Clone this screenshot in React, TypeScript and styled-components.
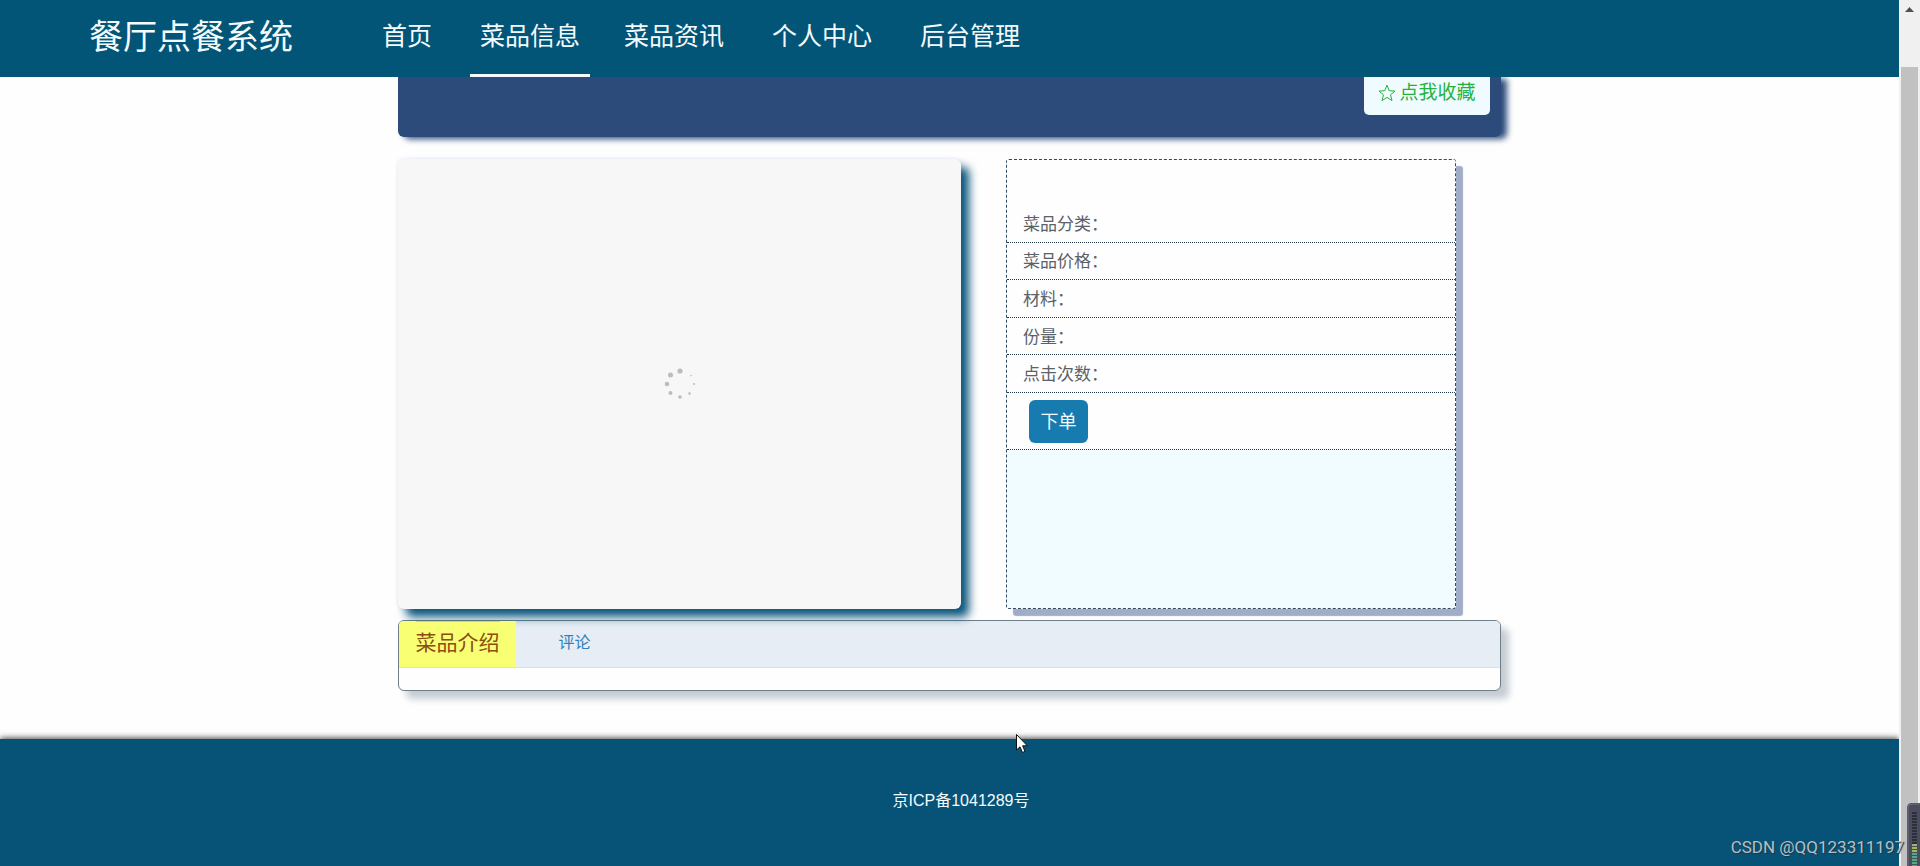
import React from "react";
import styled, { createGlobalStyle } from "styled-components";

const GlobalStyle = createGlobalStyle`
  *, *::before, *::after { box-sizing: border-box; }
  body {
    margin: 0;
    background: #fefefe;
    color: #5b6168;
    font-family: "Liberation Sans", "Noto Sans CJK SC", sans-serif;
    font-size: 16px;
  }
  a { color: inherit; text-decoration: none; }
  button { font-family: inherit; cursor: pointer; }
`;

const Shell = styled.div`
  position: relative;
  display: grid;
  grid-template-columns: minmax(0, 1fr) 21px;
  min-height: 100vh;
  overflow: hidden;
`;

const Page = styled.div`
  display: flex;
  flex-direction: column;
`;

const Header = styled.header`
  display: flex;
  align-items: stretch;
  gap: 79px;
  height: 77px;
  padding-left: 89px;
  background: #025577;
  color: #f4fbfd;
`;

const Brand = styled.a`
  font-size: 34px;
  line-height: 74px;
  white-space: nowrap;
`;

const Nav = styled.nav`
  display: flex;
  gap: 28px;
`;

const NavLink = styled.a<{ $active?: boolean }>`
  padding: 0 10px;
  border-bottom: 3px solid ${(p) => (p.$active ? "#f4fbfd" : "transparent")};
  margin-right: ${(p) => (p.$active ? "-4px" : "0")};
  font-size: 25px;
  line-height: 73px;
  white-space: nowrap;
`;

const Container = styled.main`
  width: 100%;
  max-width: 1103px;
  margin: 0 auto;
  padding-bottom: 48px;
`;

const Banner = styled.div`
  display: flex;
  justify-content: flex-end;
  align-items: flex-start;
  height: 60px;
  padding-right: 11px;
  border-radius: 0 0 6px 6px;
  background: #2c4b7b;
  box-shadow: 6px 2px 6px #2c4b7b;
  clip-path: inset(0 -20px -20px -20px);
`;

const FavoriteButton = styled.button`
  display: flex;
  align-items: center;
  justify-content: center;
  gap: 3px;
  width: 126px;
  height: 38px;
  padding: 0 0 6px;
  border: 0;
  border-radius: 0 0 5px 5px;
  background: #effbff;
  color: #25b23c;
  font-size: 19px;
  line-height: 30px;
`;

const Detail = styled.section`
  display: flex;
  gap: 45px;
  margin: 22px 45px 11px 0;
`;

const Gallery = styled.div`
  display: flex;
  flex: 1;
  align-items: center;
  justify-content: center;
  height: 450px;
  border-radius: 6px;
  background: #f7f7f7;
  box-shadow: 8px 8px 10px #0b557c, 0 0 4px #e4eaf4;
`;

const Info = styled.div`
  width: 450px;
  height: 450px;
  border: 1px dashed #34495e;
  border-radius: 3px;
  background: #f0fcff;
  box-shadow: 7px 7px 1px #a0adc9;
`;

const InfoTitle = styled.h1`
  height: 45px;
  margin: 0;
  background: #fefefe;
`;

const InfoList = styled.dl`
  display: grid;
  grid-auto-rows: 1fr;
  height: 188px;
  margin: 0;
  background: #fefefe;
`;

const InfoRow = styled.div`
  display: flex;
  align-items: center;
  padding: 3px 16px 0;
  border-bottom: 1px dotted #1f3a4d;
  font-size: 17px;
  line-height: 20px;

  dd { margin: 0; }
`;

const OrderRow = styled.div`
  display: flex;
  align-items: center;
  height: 57px;
  padding: 0 22px;
  border-bottom: 1px dotted #1f3a4d;
  background: #fefefe;
`;

const OrderButton = styled.button`
  width: 59px;
  height: 43px;
  padding: 0 0 2px;
  border: 0;
  border-radius: 6px;
  background: #187bb0;
  color: #f4fbfd;
  font-size: 18px;
`;

const Tabs = styled.section`
  height: 71px;
  overflow: hidden;
  border: 1px solid #6f7e87;
  border-radius: 6px;
  background: #fefefe;
  box-shadow: 8px 8px 7px #c5cdd3;
`;

const TabBar = styled.div`
  display: flex;
  height: 47px;
  border-bottom: 1px solid #d9e1e8;
  background: #e6edf4;
`;

const Tab = styled.div<{ $active?: boolean }>`
  display: flex;
  justify-content: center;
  width: 117px;
  background: ${(p) => (p.$active ? "#f8ff72" : "transparent")};
  color: ${(p) => (p.$active ? "#8d4c12" : "#337fb7")};
  font-size: ${(p) => (p.$active ? "21px" : "16px")};
  line-height: 42px;

  a { border-top: 1px solid ${(p) => (p.$active ? "#d3d28a" : "#cbd6df")}; }
`;

const Footer = styled.footer`
  flex: 1;
  padding: 50px 0 40px 23px;
  background: #075378;
  box-shadow: 0 -1px 6px #444;
  color: #f4fbfd;
  line-height: 24px;
  text-align: center;
`;

const ScrollTrack = styled.aside`
  display: flex;
  flex-direction: column;
  align-items: center;
  gap: 55px;
  padding: 7px 2px 0;
  background: #f0f0f0;
`;

const ScrollThumb = styled.div`
  flex: 1;
  width: 100%;
  background: #c1c1c1;
`;

const Meter = styled.svg`
  position: absolute;
  right: 0;
  bottom: 0;
`;

const Watermark = styled.span`
  position: absolute;
  right: 16px;
  bottom: 7px;
  color: #b4c0c8;
  font-family: Roboto, sans-serif;
  font-size: 17px;
  line-height: 24px;
  text-shadow: 1px 1px 1px #24333d;
`;

const Pointer = styled.svg`
  position: absolute;
  left: 1015px;
  top: 733px;
`;

const NAV = ["首页", "菜品信息", "菜品资讯", "个人中心", "后台管理"];
const FIELDS = ["菜品分类：", "菜品价格：", "材料：", "份量：", "点击次数："];

const DOTS = [
  [16, 3, 2.6],
  [6.5, 7, 2.5],
  [3, 16, 2.3],
  [6.5, 25, 2],
  [16, 29, 1.8],
  [25.5, 25.5, 1.3],
  [30, 16, 1],
  [27, 7.5, 0.8],
];

function Spinner() {
  return (
    <svg width="32" height="32" viewBox="0 0 32 32" fill="#bcbcbc">
      {DOTS.map(([cx, cy, r]) => (
        <circle key={`${cx}-${cy}`} cx={cx} cy={cy} r={r} />
      ))}
    </svg>
  );
}

export default function App() {
  return (
    <>
      <GlobalStyle />
      <Shell>
        <Page>
          <Header>
            <Brand href="#">餐厅点餐系统</Brand>
            <Nav>
              {NAV.map((label) => (
                <NavLink key={label} href="#" $active={label === "菜品信息"}>
                  {label}
                </NavLink>
              ))}
            </Nav>
          </Header>

          <Container>
            <Banner>
              <FavoriteButton type="button">
                <svg width="18" height="18" viewBox="0 0 18 18" fill="none" stroke="currentColor">
                  <path d="M9 1.2 11.2 6.7 17 7.1 12.5 10.8 14 16.6 9 13.4 4 16.6 5.5 10.8 1 7.1 6.8 6.7Z" />
                </svg>
                点我收藏
              </FavoriteButton>
            </Banner>

            <Detail>
              <Gallery>
                <Spinner />
              </Gallery>
              <Info>
                <InfoTitle />
                <InfoList>
                  {FIELDS.map((label) => (
                    <InfoRow key={label}>
                      <dt>{label}</dt>
                      <dd />
                    </InfoRow>
                  ))}
                </InfoList>
                <OrderRow>
                  <OrderButton type="button">下单</OrderButton>
                </OrderRow>
              </Info>
            </Detail>

            <Tabs>
              <TabBar>
                <Tab $active>
                  <a href="#">菜品介绍</a>
                </Tab>
                <Tab>
                  <a href="#">评论</a>
                </Tab>
              </TabBar>
            </Tabs>
          </Container>

          <Footer>京ICP备1041289号</Footer>
        </Page>

        <ScrollTrack aria-hidden="true">
          <svg width="9" height="5" viewBox="0 0 9 5" fill="#505050">
            <path d="M4.5 0 9 5H0Z" />
          </svg>
          <ScrollThumb />
        </ScrollTrack>

        <Meter width="13" height="63" viewBox="0 0 13 63" aria-hidden="true">
          <path d="M0 63V5Q0 0 5 0H13V63Z" fill="#4b4c5e" />
          <path d="M1 63V5Q1 1 5 1H13" fill="none" stroke="#6e7080" />
          <path d="M7.500 9V41" stroke="#2d2f3d" strokeWidth="5" strokeDasharray="2 1" />
          <path d="M7.500 41V49" stroke="#9fb765" strokeWidth="5" strokeDasharray="2 1" />
          <path d="M7.500 50V63" stroke="#55a884" strokeWidth="5" strokeDasharray="2 1" />
        </Meter>
        <Watermark>CSDN @QQ123311197</Watermark>
        <Pointer width="14" height="21" viewBox="0 0 14 21" aria-hidden="true">
          <path
            d="M1.500 1.500V17L5 13.800 7.500 19.500 10 18.400 7.600 12.800H12.300Z"
            fill="#fff"
            stroke="#111"
          />
        </Pointer>
      </Shell>
    </>
  );
}
